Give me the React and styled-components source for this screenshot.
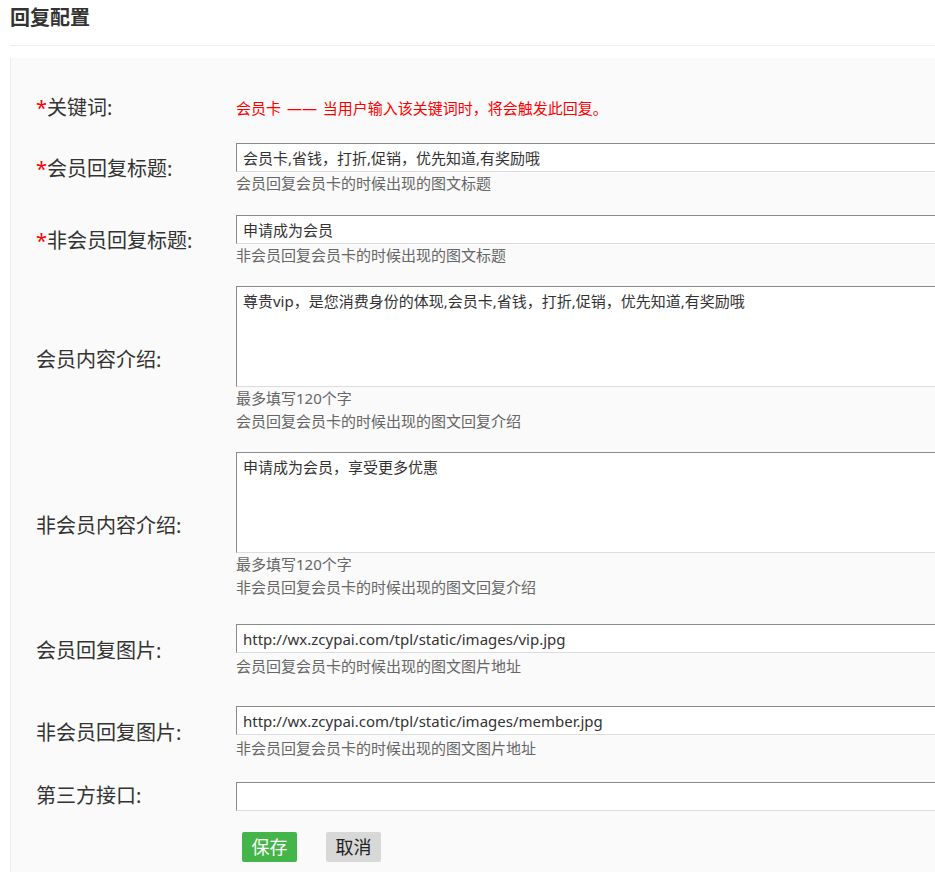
import React from 'react';
import styled, { createGlobalStyle } from 'styled-components';

const GlobalStyle = createGlobalStyle`
    body {
        margin: 0;
        background: #fff;
        overflow-x: hidden;
        font-family: "Noto Sans", "Noto Sans CJK SC", sans-serif;
        color: #333;
    }
`;

const Page = styled.div`
    width: 935px;
    overflow: hidden;
`;

const Header = styled.div`
    padding: 8px 0 0 10px;
`;

const Title = styled.h2`
    margin: 0;
    font-size: 20px;
    line-height: 20px;
    font-weight: bold;
    color: #333;
    height: 37px;
`;

const Divider = styled.div`
    height: 1px;
    background: #eee;
    margin-left: 10px;
`;

const Panel = styled.div`
    margin: 12px 0 0 10px;
    background: #fafafa;
    border-left: 1px solid #eee;
    padding: 35px 0 30px;
`;

const Row = styled.div`
    display: grid;
    grid-template-columns: 225px 1fr;
    align-items: center;
    margin-top: ${p => p.$gap || 0}px;
`;

const Label = styled.div`
    padding-left: 25px;
    font-size: 20px;
    line-height: 30px;
    color: #333;
    white-space: nowrap;
`;

const Star = styled.span`
    color: #f00;
`;

const Field = styled.div`
    display: flex;
    flex-direction: column;
    align-items: flex-start;
`;

const Hint = styled.div`
    font-size: 15px;
    line-height: 30px;
    color: #f00;
    white-space: nowrap;
`;

const Dash = styled.span`
    margin: 0 2px;
`;

const TextInput = styled.input`
    box-sizing: border-box;
    width: 720px;
    height: 29px;
    margin: 0;
    padding: 0 6px;
    border: 1px solid;
    border-color: #8a8a8a #ddd #ddd #8a8a8a;
    background: #fff;
    font-family: inherit;
    font-size: 15px;
    color: #333;
    outline: none;
`;

const TextArea = styled.textarea`
    box-sizing: border-box;
    width: 720px;
    height: 101px;
    margin: 0;
    padding: 3px 6px;
    border: 1px solid;
    border-color: #8a8a8a #ddd #ddd #8a8a8a;
    background: #fff;
    font-family: inherit;
    font-size: 15px;
    line-height: 22px;
    color: #333;
    resize: none;
    outline: none;
    display: block;
`;

const Help = styled.div`
    font-size: 15px;
    line-height: 23px;
    color: #666;
    margin-top: ${p => p.$offset || 0}px;
`;

const Actions = styled.div`
    display: flex;
    gap: 29px;
    padding-left: 6px;
`;

const Button = styled.button`
    width: 55px;
    height: 30px;
    padding: 0;
    border: none;
    border-radius: 2px;
    font-family: inherit;
    font-size: 18px;
    line-height: 30px;
    background: ${p => (p.$primary ? '#44b549' : '#d8d8d8')};
    color: ${p => (p.$primary ? '#fff' : '#222')};
    cursor: pointer;
`;

const fields = [
    {
        label: '会员回复标题:',
        required: true,
        gap: 20,
        value: '会员卡,省钱，打折,促销，优先知道,有奖励哦',
        help: ['会员回复会员卡的时候出现的图文标题'],
    },
    {
        label: '非会员回复标题:',
        required: true,
        gap: 20,
        value: '申请成为会员',
        help: ['非会员回复会员卡的时候出现的图文标题'],
    },
    {
        label: '会员内容介绍:',
        gap: 19,
        multi: true,
        value: '尊贵vip，是您消费身份的体现,会员卡,省钱，打折,促销，优先知道,有奖励哦',
        help: ['最多填写120个字', '会员回复会员卡的时候出现的图文回复介绍'],
    },
    {
        label: '非会员内容介绍:',
        gap: 19,
        multi: true,
        value: '申请成为会员，享受更多优惠',
        help: ['最多填写120个字', '非会员回复会员卡的时候出现的图文回复介绍'],
    },
    {
        label: '会员回复图片:',
        gap: 25,
        value: 'http://wx.zcypai.com/tpl/static/images/vip.jpg',
        help: ['会员回复会员卡的时候出现的图文图片地址'],
        offset: 2,
    },
    {
        label: '非会员回复图片:',
        gap: 28,
        value: 'http://wx.zcypai.com/tpl/static/images/member.jpg',
        help: ['非会员回复会员卡的时候出现的图文图片地址'],
        offset: 2,
    },
    {
        label: '第三方接口:',
        gap: 21,
        value: '',
        help: [],
    },
];

const App = () => {
    return (
        <Page>
            <GlobalStyle />
            <Header>
                <Title>回复配置</Title>
            </Header>
            <Divider />
            <Panel>
                <Row>
                    <Label><Star>*</Star>关键词:</Label>
                    <Field>
                        <Hint>会员卡 <Dash>——</Dash> 当用户输入该关键词时，将会触发此回复。</Hint>
                    </Field>
                </Row>
                {fields.map(f => (
                    <Row key={f.label} $gap={f.gap}>
                        <Label>
                            {f.required && <Star>*</Star>}
                            {f.label}
                        </Label>
                        <Field>
                            {f.multi
                                ? <TextArea defaultValue={f.value} />
                                : <TextInput type="text" defaultValue={f.value} />}
                            {f.help.map((h, i) => (
                                <Help key={h} $offset={i === 0 ? f.offset : 0}>{h}</Help>
                            ))}
                        </Field>
                    </Row>
                ))}
                <Row $gap={21}>
                    <div />
                    <Actions>
                        <Button $primary>保存</Button>
                        <Button>取消</Button>
                    </Actions>
                </Row>
            </Panel>
        </Page>
    );
};

export default App;
